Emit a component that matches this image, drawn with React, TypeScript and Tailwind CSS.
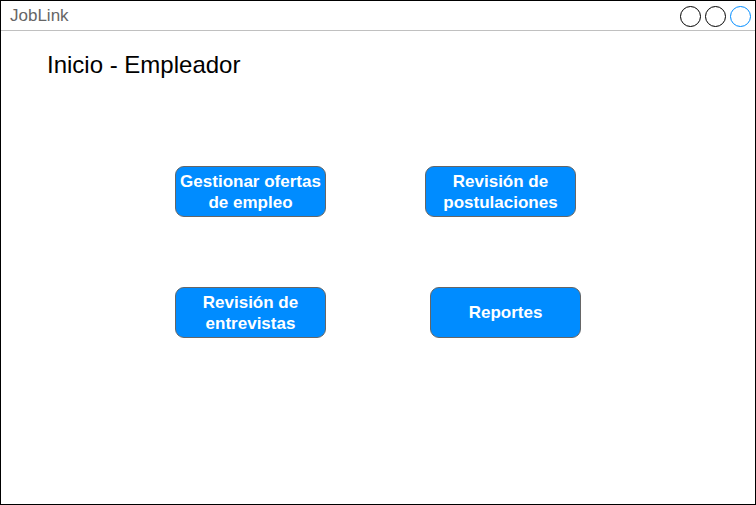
const actions = [
  { label: ["Gestionar ofertas", "de empleo"] },
  { label: ["Revisión de", "postulaciones"] },
  { label: ["Revisión de", "entrevistas"] },
  { label: ["Reportes"] },
];

function ActionButton({ lines }: { lines: string[] }) {
  return (
    <button className="w-[151px] h-[51px] rounded-[9px] border border-[#666666] bg-[#008cff] text-white font-bold text-[17px] leading-[21px] flex flex-col items-center justify-center">
      {lines.map((l) => (
        <span key={l}>{l}</span>
      ))}
    </button>
  );
}

export default function App() {
  return (
    <div
      className="w-[756px] h-[505px] border border-black bg-white flex flex-col"
      style={{ fontFamily: '"Liberation Sans", Arial, sans-serif' }}
    >
      <div className="h-[30px] border-b border-[#c0c0c0] flex items-center justify-between pl-[9px] pr-[4px] shrink-0">
        <span className="text-[17px] text-[#666666]">JobLink</span>
        <div className="flex gap-[4px] items-center pt-[2px]">
          <span className="w-[21px] h-[21px] rounded-full border border-black" />
          <span className="w-[21px] h-[21px] rounded-full border border-black" />
          <span className="w-[21px] h-[21px] rounded-full border border-[#008cff]" />
        </div>
      </div>
      <h1 className="text-[24px] leading-[28px] text-black pl-[46px] mt-[20px]">Inicio - Empleador</h1>
      <div className="flex flex-col gap-[70px] mt-[87px] pl-[174px]">
        <div className="flex gap-[99px]">
          <ActionButton lines={actions[0].label} />
          <ActionButton lines={actions[1].label} />
        </div>
        <div className="flex gap-[104px]">
          <ActionButton lines={actions[2].label} />
          <ActionButton lines={actions[3].label} />
        </div>
      </div>
    </div>
  );
}
